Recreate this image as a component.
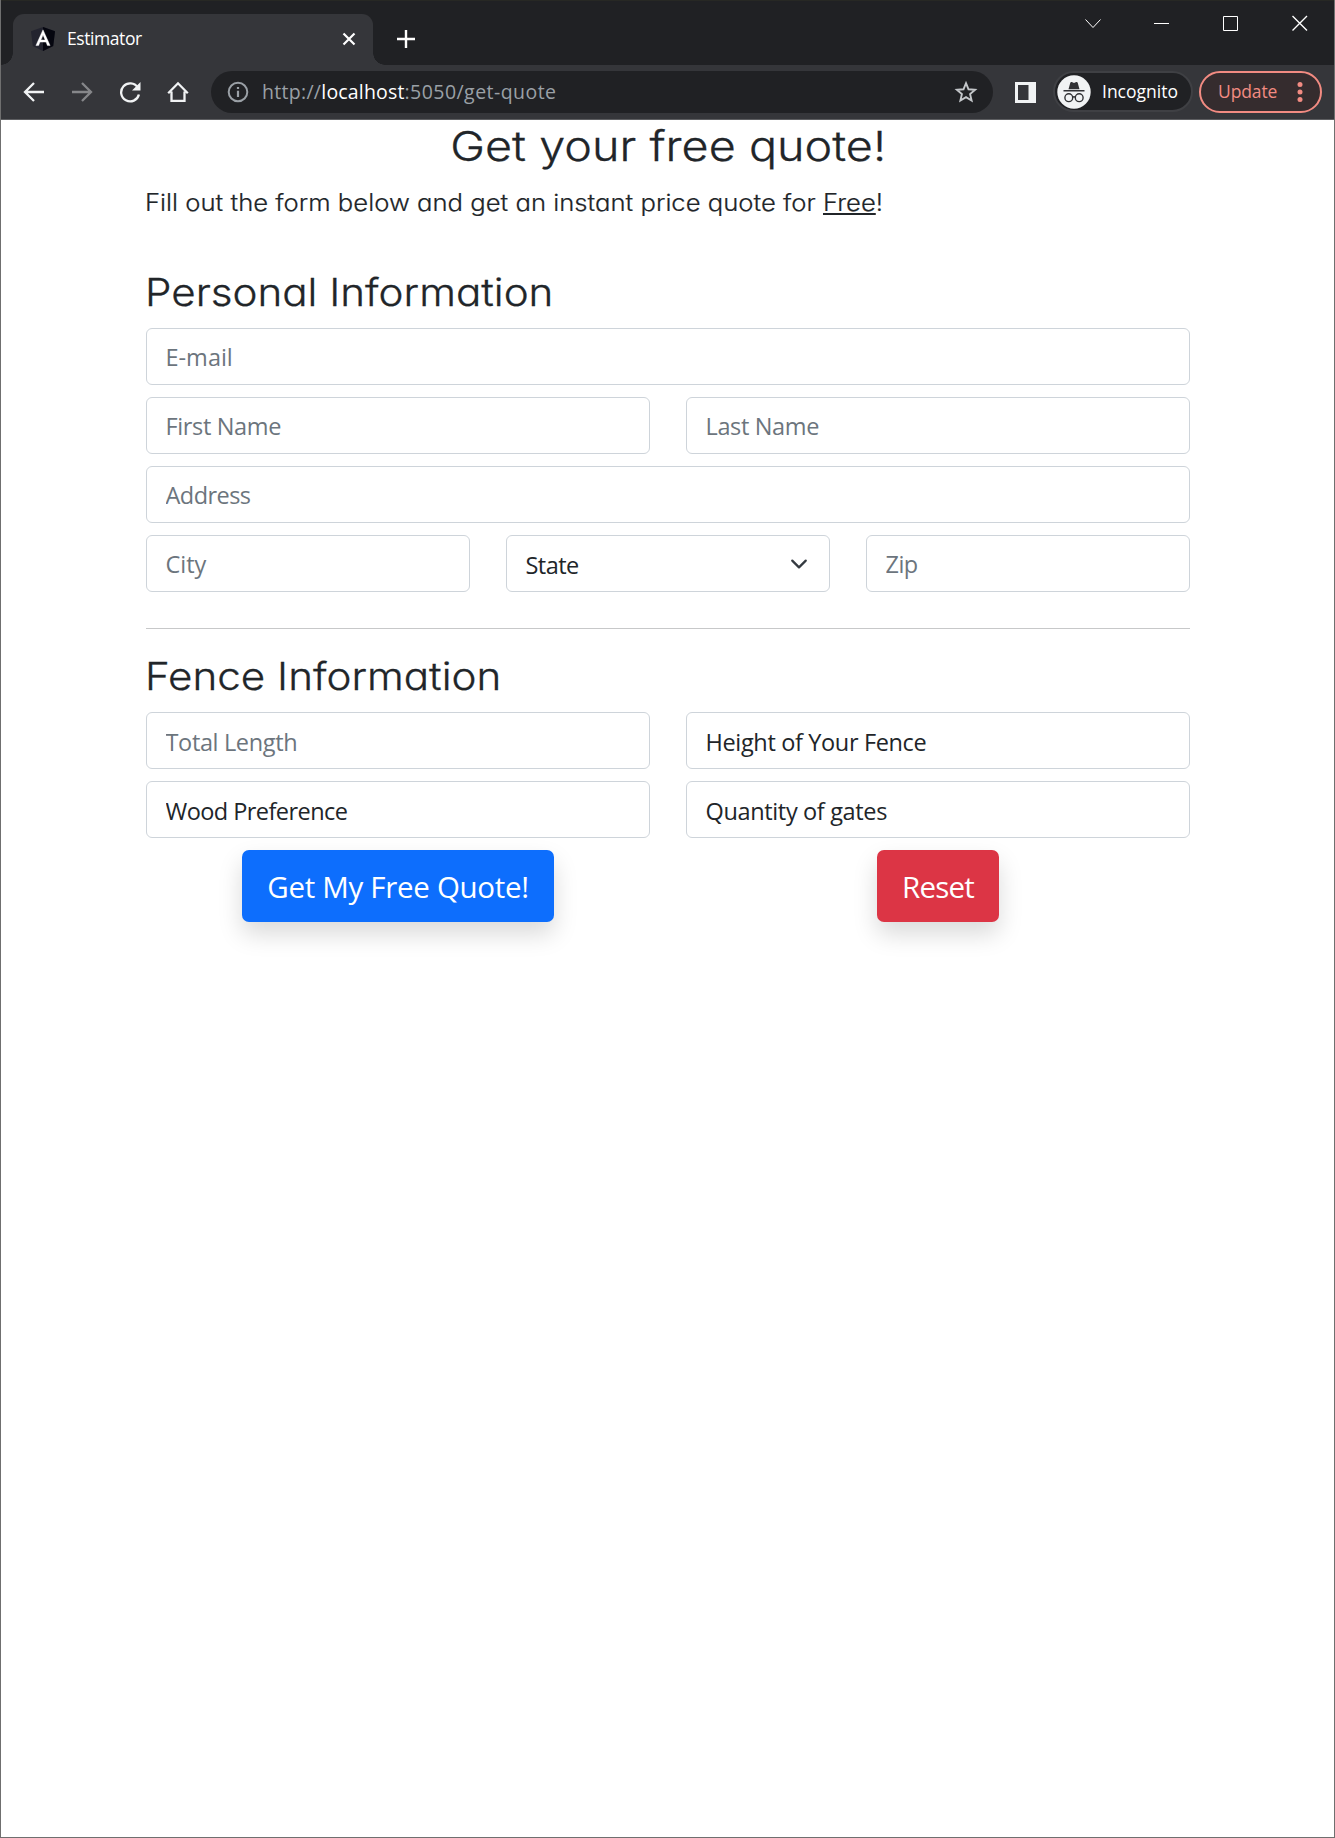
<div class="window">
  <header class="tabstrip">
    <div class="tab">
      <svg class="favicon" viewBox="0 0 24 24">
        <path d="M12 0 24 4.2 22.2 19 12 24 1.8 19 0 4.2z" fill="#23242f" />
        <path d="M12 0 24 4.2 22.2 19 12 24z" fill="#05060f" />
        <path d="M12 2.8 4.9 18.6h2.7L9 15.1h6l1.4 3.5h2.7zM12 8l2.1 5H9.9z" fill="#fff" stroke="#fff" stroke-width=".4" fill-rule="evenodd" />
      </svg>
      <span class="tab-title">Estimator</span>
      <svg class="tab-close" viewBox="0 0 14 14"><path d="M1.5 1.5l11 11M12.5 1.5l-11 11" stroke="#fff" stroke-width="2.2" /></svg>
    </div>
    <svg class="new-tab" viewBox="0 0 18 18"><path d="M9 0v18M0 9h18" stroke="#fff" stroke-width="2.4" /></svg>
    <div class="controls">
      <svg viewBox="0 0 16 16"><path d="M.5 4.5 8 12.5 15.5 4.5" /></svg>
      <svg viewBox="0 0 16 16"><path d="M0 8.5h15" /></svg>
      <svg viewBox="0 0 16 16"><path d="M.5 1.5h14v14H.5z" /></svg>
      <svg viewBox="0 0 16 16"><path d="M.5 1l14.5 14.5M15 1 .5 15.5" stroke-width="1.4" /></svg>
    </div>
  </header>

  <nav class="toolbar">
    <svg class="nav-icon" viewBox="0 0 22 22"><path d="M21 11H2.5M11 2l-9 9 9 9" /></svg>
    <svg class="nav-icon dim" viewBox="0 0 22 22"><path d="M1 11h18.5M11 2l9 9-9 9" /></svg>
    <svg class="nav-icon" viewBox="0 0 22 22"><path d="M18.7 6.5A9 9 0 1 0 19.9 13.5" /><path d="M21.5 1v8.5H13z" class="solid" /></svg>
    <svg class="nav-icon" viewBox="0 0 22 22"><path d="M1.2 12.3 11 2.3l9.8 10M4.5 10.5v9.3h13v-9.3" /></svg>
    <div class="omnibox">
      <svg class="info" viewBox="0 0 22 22">
        <circle cx="11" cy="11" r="9.3" fill="none" stroke="#9aa0a6" stroke-width="2" />
        <path d="M11 9.7v6.3M11 6v2.1" stroke="#9aa0a6" stroke-width="2.2" />
      </svg>
      <span class="url">http://<span class="host">localhost</span><span class="path">:5050/get-quote</span></span>
      <svg class="star" viewBox="0 0 24 24"><path d="M12 3.2l2.5 6.1 6.6.5-5 4.3 1.5 6.4L12 17.1l-5.6 3.4 1.5-6.4-5-4.3 6.6-.5z" fill="none" stroke="#c4c7ca" stroke-width="1.9" /></svg>
    </div>
    <svg class="panel" viewBox="0 0 21 21"><path d="M0 0h21v21H0zM3 3v15h10.5V3z" fill="#f1f3f4" fill-rule="evenodd" /></svg>
    <div class="incognito">
      <svg viewBox="0 0 34 34">
        <circle cx="17" cy="17" r="16.7" fill="#f1f3f4" />
        <path d="M11.5 14.3 13.3 7.8c.2-.7.9-1 1.5-.7l2.2.8 2.2-.8c.6-.3 1.3 0 1.5.7l1.8 6.5zM6.5 15h21v1.5h-21z" fill="#303134" />
        <g fill="none" stroke="#303134" stroke-width="1.4"><circle cx="11.8" cy="22.7" r="3.9" /><circle cx="22.2" cy="22.7" r="3.9" /><path d="M15.7 22.2q1.3-1 2.6 0" /></g>
      </svg>
      <span>Incognito</span>
    </div>
    <div class="update">
      <span>Update</span>
      <svg viewBox="0 0 6 20"><circle cx="3" cy="2.5" r="2.5" /><circle cx="3" cy="10" r="2.5" /><circle cx="3" cy="17.5" r="2.5" /></svg>
    </div>
  </nav>

  <main>
    <h1><span>Get your free quote!</span></h1>
    <p><span>Fill out the form below and get an instant price quote for <u>Free</u>!</span></p>

    <form onsubmit={(e) => e.preventDefault()}>
      <h2><span>Personal Information</span></h2>
      <div class="fields">
        <input class="wide even" placeholder="E-mail" />
        <input class="half" placeholder="First Name" />
        <input class="half" placeholder="Last Name" />
        <input class="wide tight" placeholder="Address" />
        <input class="third even" placeholder="City" />
        <label class="third dropdown">
          <select class="tight"><option>State</option></select>
          <svg viewBox="0 0 16 16"><path d="M2 5l6 6 6-6" /></svg>
        </label>
        <input class="third tight" placeholder="Zip" />
      </div>

      <hr />

      <h2><span>Fence Information</span></h2>
      <div class="fields">
        <input class="half low" placeholder="Total Length" />
        <select class="half"><option>Height of Your Fence</option></select>
        <select class="half tight"><option>Wood Preference</option></select>
        <select class="half"><option>Quantity of gates</option></select>
        <div class="half action"><button class="primary" type="submit">Get My Free Quote!</button></div>
        <div class="half action"><button class="danger" type="reset">Reset</button></div>
      </div>
    </form>
  </main>
</div>

<style>
  :global(body) { margin: 0; background: #fff; }
  * { box-sizing: border-box; }
  svg { display: block; flex: none; }

  .window {
    height: 1838px;
    display: flex;
    flex-direction: column;
    border: 1px solid #6f6f6f;
    border-top: 0;
    background: #fff;
    color: #212529;
    font-family: 'Open Sans', 'Noto Sans', sans-serif;
  }

  /* Browser tab strip */
  .tabstrip {
    display: flex;
    height: 65px;
    padding-left: 12px;
    background: #202124;
    border-top: 1px solid #272824;
  }
  .tab {
    position: relative;
    display: flex;
    align-items: center;
    width: 360px;
    height: 51px;
    margin-top: 13px;
    padding: 0 17px 1px 18px;
    border-radius: 11px 11px 0 0;
    background: #35363a;
    color: #fff;
    font-size: 17.5px;
    letter-spacing: -0.42px;
  }
  .tab::before, .tab::after {
    content: '';
    position: absolute;
    bottom: 0;
    width: 12px;
    height: 12px;
  }
  .tab::before { right: 100%; background: radial-gradient(circle at 0 0, #202124 11.5px, #35363a 12px); }
  .tab::after { left: 100%; background: radial-gradient(circle at 100% 0, #202124 11.5px, #35363a 12px); }
  .favicon { width: 24px; height: 24px; }
  .tab-title { flex: 1; padding: 0 0 2px 12px; }
  .tab-close { width: 14px; height: 14px; }
  .new-tab { width: 18px; height: 18px; margin: 29px 0 0 24px; }
  .controls { display: flex; gap: 53px; margin: 14px 26px 0 auto; }
  .controls svg { width: 16px; height: 16px; fill: none; stroke: #fff; stroke-width: 1; }

  /* Browser toolbar */
  .toolbar {
    display: flex;
    align-items: center;
    height: 55px;
    padding: 0 11px 0 22px;
    background: #35363a;
    border-bottom: 1px solid #5d5e61;
  }
  .nav-icon { width: 22px; height: 22px; margin: 0 26px 1px 0; fill: none; stroke: #f1f3f4; stroke-width: 2.3; }
  .dim { stroke: #86878a; }
  .solid { fill: #f1f3f4; stroke: none; }
  .omnibox {
    display: flex;
    align-items: center;
    width: 782px;
    height: 42px;
    margin-left: -4px;
    padding: 0 15px 0 16px;
    border-radius: 21px;
    background: #202124;
  }
  .info { width: 22px; height: 22px; }
  .url { flex: 1; padding: 0 0 1px 13px; color: #9aa0a6; font-size: 19.5px; letter-spacing: 0.3px; white-space: nowrap; }
  .host { color: #fff; letter-spacing: 0.17px; }
  .path { letter-spacing: 0.45px; }
  .star { width: 24px; height: 24px; }
  .panel { width: 21px; height: 21px; margin: 0 17px 0 22px; }
  .incognito {
    display: flex;
    align-items: center;
    width: 140px;
    height: 41px;
    margin-bottom: 1px;
    padding-left: 2px;
    border: 2px solid #3f4044;
    border-radius: 21px;
    background: #202124;
    color: #fff;
    font-size: 17.5px;
  }
  .incognito svg { width: 34px; height: 34px; }
  .incognito span { padding: 0 0 1px 11px; }
  .update {
    display: flex;
    align-items: center;
    justify-content: space-between;
    width: 123px;
    height: 42px;
    margin: 0 0 1px 6px;
    padding: 0 17px;
    border: 2px solid #f28b82;
    border-radius: 21px;
    background: #352c2e;
    color: #f28b82;
    font-size: 17.5px;
    letter-spacing: -0.12px;
  }
  .update span { padding-bottom: 1px; }
  .update svg { width: 6px; height: 20px; fill: #f28b82; }

  /* Quote page */
  main { flex: 1; padding: 0 144px 0 145px; }
  h1, h2, p {
    margin: 0;
    font-family: Inter, 'Open Sans', sans-serif;
    font-weight: 350;
    font-optical-sizing: none;
    font-feature-settings: 'cv11' 1;
  }
  h1 span, h2 span, p span { display: inline-block; transform: scaleX(1.094); transform-origin: left; }
  h1 { padding-top: 1px; font-size: 41px; line-height: 50px; text-align: center; }
  h1 span { transform: scaleX(1.14); transform-origin: center; }
  p { margin: 14px 0 0 -1px; font-size: 23.5px; line-height: 36px; }
  p span { transform: scaleX(1.092); -webkit-text-stroke: 0.2px currentColor; }
  h1 span, h2 span { -webkit-text-stroke: 0.3px currentColor; }
  u { text-decoration-thickness: 2px; text-underline-offset: 2px; text-decoration-skip-ink: none; }
  h2 { margin: 0 0 12px -1.5px; font-size: 38.5px; line-height: 48px; }
  form { margin-top: 47px; }
  .fields { display: grid; grid-template-columns: repeat(6, 1fr); gap: 12px 36px; }
  .wide { grid-column: span 6; }
  .half { grid-column: span 3; }
  .third { grid-column: span 2; }
  input, select {
    width: 100%;
    min-width: 0;
    height: 57px;
    margin: 0;
    padding: 0 18.5px;
    border: 1px solid #ced4da;
    border-radius: 6px;
    background: #fff;
    color: #212529;
    font: 23.5px/55px 'Open Sans', sans-serif;
    letter-spacing: -0.35px;
    appearance: none;
  }
  select { padding-top: 2px; }
  input.low { padding-top: 2px; }
  input::placeholder { color: #6c757d; opacity: 1; }
  input.even { letter-spacing: 0; }
  input.tight, select.tight { letter-spacing: -0.55px; }
  .dropdown { display: grid; align-items: center; }
  .dropdown > * { grid-area: 1 / 1; }
  .dropdown svg {
    justify-self: end;
    width: 18px;
    height: 18px;
    margin-right: 22px;
    fill: none;
    stroke: #343a40;
    stroke-width: 2;
    stroke-linecap: round;
    stroke-linejoin: round;
    pointer-events: none;
  }
  hr { height: 1px; margin: 36px 0 23px; border: 0; background: #c7c8c9; }
  .action { display: flex; justify-content: center; }
  button {
    height: 72px;
    padding: 0 24px;
    border: 0;
    border-radius: 7px;
    color: #fff;
    font: 29.5px 'Open Sans', sans-serif;
    letter-spacing: -0.3px;
    box-shadow: 0 12px 24px rgba(0, 0, 0, 0.15);
  }
  .primary { width: 312px; background: #0d6efd; }
  .danger { width: 122px; background: #dc3545; letter-spacing: -0.8px; }
</style>
